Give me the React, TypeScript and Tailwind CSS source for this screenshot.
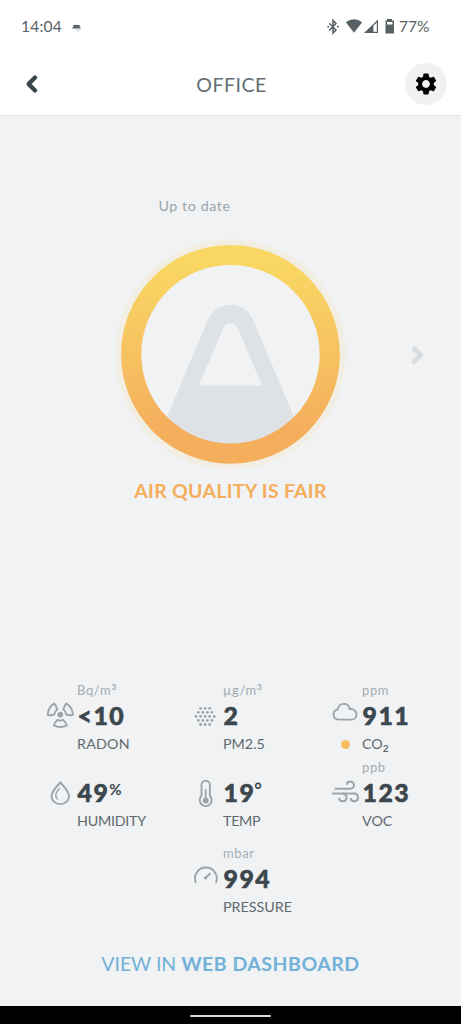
import React from "react";
import { MdSettings } from "react-icons/md";

const RadonIcon = () => (
  <svg className="h-8 w-[37px] shrink-0" viewBox="0 0 37 32" fill="none" stroke="#9ba5a9" strokeWidth="1.9" strokeLinejoin="round">
    <circle cx="20.3" cy="15.6" r="2.9" fill="#9ba5a9" stroke="none" />
    {[0, 120, 240].map((a) => (
      <path key={a} transform={`rotate(${a} 20.3 15.6)`} d="M17.4 20.8Q20.3 22.2 23.2 20.8Q26.4 24 26.8 26.4Q20.3 29.8 13.8 26.4Q14.2 24 17.4 20.8Z" />
    ))}
  </svg>
);

const ParticlesIcon = () => (
  <svg className="h-8 w-[37px] shrink-0" viewBox="0 0 37 32" fill="#9ba5a9">
    {[3, 4, 5, 4, 3].map((n, row) =>
      Array.from({ length: n }, (_, i) => (
        <circle key={`${row}-${i}`} cx={19.1 + (i - (n - 1) / 2) * 4.55} cy={9.3 + row * 4.05} r="1.4" />
      )),
    )}
  </svg>
);

const CloudIcon = () => (
  <svg className="h-8 w-[37px] shrink-0" viewBox="0 0 37 32" fill="none" stroke="#9ba5a9" strokeWidth="1.9">
    <path d="M13.3 20.6C10.3 20.6 8.5 18.4 8.5 15.6C8.5 12.7 10.4 10.8 12.7 10.6C13 7.1 15.6 4.9 18.8 4.9C21.8 4.9 24.1 6.8 24.8 10.1C28.8 9.8 31.5 12.1 31.5 15.4C31.5 18.4 29.3 20.6 26.5 20.6Z" />
  </svg>
);

const DropIcon = () => (
  <svg className="h-8 w-[37px] shrink-0" viewBox="0 0 37 32" fill="none" stroke="#9ba5a9" strokeWidth="1.9" strokeLinecap="round">
    <path d="M20.3 6.5C24.6 11.1 29 15.3 29 20C29 24.9 25.2 28.1 20.3 28.1S11.6 24.9 11.6 20C11.6 15.3 16 11.1 20.3 6.5Z" />
    <path d="M19.5 12.5C17 15 15.3 17.1 15.8 20.2Q16.1 22 17.3 23" strokeWidth="1.5" />
  </svg>
);

const ThermometerIcon = () => (
  <svg className="h-8 w-[37px] shrink-0" viewBox="0 0 37 32" fill="none" stroke="#9ba5a9" strokeWidth="1.9">
    <path d="M15.5 19.8V8.9a4.2 4.2 0 0 1 8.4 0V19.8a6 6 0 1 1-8.4 0Z" />
    <path d="M19.7 14V23" strokeWidth="1.8" strokeLinecap="round" />
    <circle cx="19.7" cy="24.5" r="2.9" fill="#9ba5a9" stroke="none" />
  </svg>
);

const WindIcon = () => (
  <svg className="h-8 w-[37px] shrink-0" viewBox="0 0 37 32" fill="none" stroke="#9ba5a9" strokeWidth="2">
    <path d="M9.7 12.8H25.2C27.6 12.8 29 11 29 9.1C29 7 27.4 5.6 25.3 5.6C23.3 5.6 22 7 22 8.7" />
    <path d="M6.9 17.5H29.2C31.3 17.5 32.9 19 32.9 21.4C32.9 23.8 31.3 25.2 29.4 25.2C27.3 25.2 25.8 24 25.8 22" />
    <path d="M17.4 17.5C19.9 17.7 21.5 19.2 21.5 21.5C21.5 23.8 20 25.2 17.8 25.2C15.5 25.2 14.1 23.8 14.1 21.8" />
  </svg>
);

const GaugeIcon = () => (
  <svg className="h-8 w-[37px] shrink-0" viewBox="0 0 37 32" fill="none" stroke="#9ba5a9" strokeWidth="1.9">
    <path d="M9.9 20.8A10.9 10.9 0 1 1 29.9 20.8" />
    <path d="M19.7 15.7L24.4 11.2" />
    <circle cx="19.5" cy="15.8" r="1.6" fill="#9ba5a9" stroke="none" />
  </svg>
);

type MetricProps = {
  icon: React.ReactNode;
  unit?: React.ReactNode;
  value: string;
  suffix?: React.ReactNode;
  label: React.ReactNode;
  dot?: boolean;
};

function Metric({ icon, unit, value, suffix, label, dot }: MetricProps) {
  return (
    <div className="flex h-[77px] flex-col whitespace-nowrap">
      <div className="h-[18px] pl-[37px] text-[13px] leading-[18px] tracking-[0.6px] text-[#a5adb1]">{unit}</div>
      <div className="flex h-8">
        {icon}
        <div className="flex pl-[0.5px] text-[24.8px] leading-[33px] font-black tracking-[1.5px] text-[#3b474c] [-webkit-text-stroke:0.6px_#3b474c]">
          {value}
          {suffix}
        </div>
      </div>
      <div className="mt-1 flex h-[18px] items-center text-[14.3px] leading-[18px] text-[#5f6a6f]">
        <div className="flex w-[37px] shrink-0 pl-[15.5px]">
          {dot && <span className="size-[9px] rounded-full bg-[#f7be60]" />}
        </div>
        {label}
      </div>
    </div>
  );
}

const Cubed = () => <span className="inline-block h-[10px] translate-y-[3px] text-[16px] leading-[10px] tracking-normal">³</span>;

function AirQualityRing() {
  return (
    <svg className="h-[241px] w-[241px]" viewBox="110 234 241 241">
      <defs>
        <linearGradient id="ring" x1="0" y1="245" x2="0" y2="463" gradientUnits="userSpaceOnUse">
          <stop offset="0.08" stopColor="#f9d762" />
          <stop offset="0.5" stopColor="#f6c261" />
          <stop offset="0.84" stopColor="#f5ae5c" />
        </linearGradient>
        <radialGradient id="halo" cx="230.5" cy="354.3" r="117" gradientUnits="userSpaceOnUse">
          <stop offset="0.93" stopColor="#f2eee0" />
          <stop offset="0.97" stopColor="#f2eee4" />
          <stop offset="1" stopColor="#f0f2f4" />
        </radialGradient>
        <clipPath id="disc"><circle cx="230.5" cy="354.3" r="90" /></clipPath>
      </defs>
      <circle cx="230.5" cy="354.3" r="117" fill="url(#halo)" />
      <circle cx="230.5" cy="354.3" r="90" fill="#f0f2f4" />
      <path
        clipPath="url(#disc)"
        fill="#dee2e5"
        fillRule="evenodd"
        d="M150 457L207.5 321C212 310 220 305 230.5 305S249 310 253.5 321L311 457ZM199 385.5H262L238.2 329C236.5 325 234 323 230.5 323S224.5 325 222.8 329Z"
      />
      <circle cx="230.5" cy="354.3" r="99.3" fill="none" stroke="url(#ring)" strokeWidth="20.2" />
    </svg>
  );
}

export default function App() {
  return (
    <div className="flex h-[1024px] w-[461px] flex-col bg-[#f0f2f4] font-['Lato','Liberation_Sans',sans-serif]">
      <div className="flex h-[53px] shrink-0 items-center bg-white pl-[21px] text-[15.5px] text-[#566065]">
        <span className="w-[50px] tracking-[0.2px]">14:04</span>
        <svg className="h-3 w-3" viewBox="0 0 12 12">
          <path d="M1 7.5L2.5 5.5L2 4H4Q5.5 3.4 7 4H9L8.5 5.5L10 7.5Z" fill="#59646a" />
          <path d="M3 8H10.5L7.5 11Z" fill="#e1e4e6" />
        </svg>
        <svg className="ml-[243px] h-5 w-[72px]" viewBox="326 17 72 20" fill="#566065">
          <path d="M329.3 23.2L336 30L333 33.2V20.4L336 23.6L329.3 30.4" fill="none" stroke="#566065" strokeWidth="1.5" />
          <circle cx="328.2" cy="26.8" r="1" />
          <circle cx="337.9" cy="26.8" r="1" />
          <path d="M345.8 22.2Q354 16.4 362.2 22.2L354 32.7Z" />
          <path fillRule="evenodd" d="M364 33L378 19.5V33ZM373.4 25.8V31.8H376.8V22.4Z" />
          <path fillRule="evenodd" d="M387 20.5V19H392V20.5H394V33.5H385.5V20.5ZM387 22V24.5H392.5V22Z" />
        </svg>
        <span className="ml-px">77%</span>
      </div>

      <header className="flex h-[63px] shrink-0 items-center justify-between border-b border-[#dddfe1] bg-white pr-[14px] pl-[25px]">
        <button aria-label="Back" className="flex w-[43px]">
          <svg className="h-5 w-[14px]" viewBox="0 0 14 20" fill="none" stroke="#3b474c" strokeWidth="4.4" strokeLinecap="round" strokeLinejoin="round">
            <path d="M10 3.5L3.6 10L10 16.5" />
          </svg>
        </button>
        <h1 className="mt-px ml-[-10px] text-[19.5px] tracking-[0.5px] text-[#646e73]">OFFICE</h1>
        <button aria-label="Settings" className="flex size-[42px] items-center justify-center rounded-full bg-[#f0f1f3]">
          <MdSettings size={26} color="#000" />
        </button>
      </header>

      <main className="flex flex-1 flex-col">
        <div className="mt-[80px] ml-[158.5px] h-5 text-[14.3px] leading-5 tracking-[0.55px] text-[#9ba5a9]">Up to date</div>
        <div className="mt-[18px] flex items-center pl-[110px]">
          <AirQualityRing />
          <svg className="ml-[59px] h-5 w-4" viewBox="0 0 16 20" fill="none" stroke="#d8dcdf" strokeWidth="4.6" strokeLinecap="round" strokeLinejoin="round">
            <path d="M4 3.5L10.8 10L4 16.5" />
          </svg>
        </div>
        <div className="mt-[4px] text-center text-[19.5px] leading-6 font-bold tracking-[0.28px] text-[#f5ae5c]">AIR QUALITY IS FAIR</div>

        <section className="mt-[178px] grid grid-cols-[146px_139px_136px] pl-10">
          <Metric icon={<RadonIcon />} unit={<>Bq/m<Cubed /></>} value="<10" label={<span className="tracking-[0.2px]">RADON</span>} />
          <Metric icon={<ParticlesIcon />} unit={<>µg/m<Cubed /></>} value="2" label="PM2.5" />
          <Metric icon={<CloudIcon />} unit="ppm" value="911" dot label={<span>CO<span className="inline-block translate-y-[3px] text-[10px] font-bold">2</span></span>} />
          <Metric icon={<DropIcon />} value="49" suffix={<span className="-mt-[3px] text-[15px] font-bold tracking-normal [-webkit-text-stroke:0px]">%</span>} label={<span className="tracking-[-0.25px]">HUMIDITY</span>} />
          <Metric icon={<ThermometerIcon />} value="19" suffix={<span className="-ml-px -mt-[2px] text-[18px] font-bold [-webkit-text-stroke:0px]">°</span>} label={<span className="tracking-[-0.3px]">TEMP</span>} />
          <Metric icon={<WindIcon />} unit="ppb" value="123" label="VOC" />
          <div className="col-start-2 mt-[9px]">
            <Metric icon={<GaugeIcon />} unit="mbar" value="994" label="PRESSURE" />
          </div>
        </section>

        <a className="mt-[31px] text-center text-[19.5px] leading-6 tracking-[-0.05px] text-[#72b1d9]">
          VIEW IN <b className="font-bold tracking-[0.5px]">WEB DASHBOARD</b>
        </a>
      </main>

      <footer className="flex h-[18px] shrink-0 justify-center bg-black pt-[8.5px]">
        <div className="h-[2.5px] w-[81px] rounded-full bg-[#d5dcdf]" />
      </footer>
    </div>
  );
}
